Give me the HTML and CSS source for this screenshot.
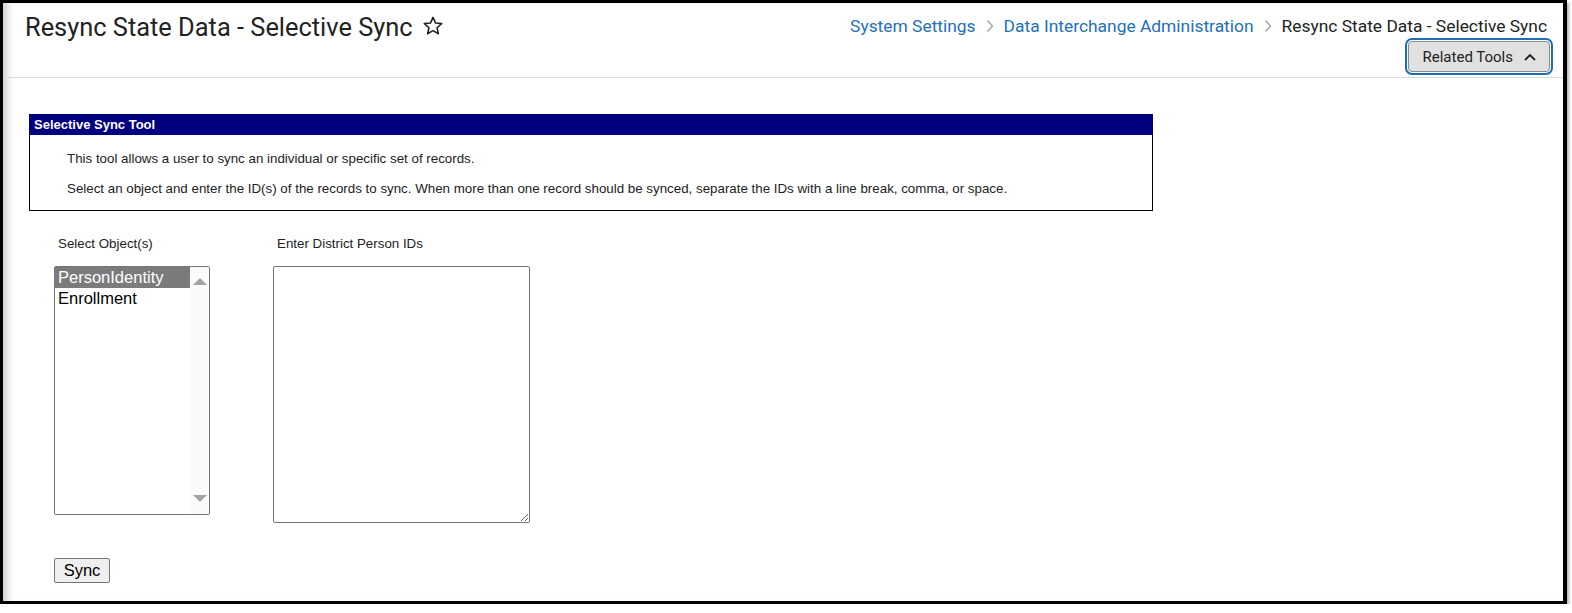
FILE: index.html
```html
<!DOCTYPE html>
<html lang="en">
<head>
    <meta charset="UTF-8">
    <title>Resync State Data - Selective Sync</title>
    <link rel="stylesheet" href="styles.css">
</head>
<body>
    <div class="window">
        <div class="page-header">
            <h1 class="page-title">
                Resync State Data - Selective Sync
                <svg class="star" width="22" height="22" viewBox="0 0 24 24">
                    <path d="M12 2.6l2.8 6.2 6.7.6-5.1 4.5 1.5 6.6L12 17.1l-5.9 3.4 1.5-6.6-5.1-4.5 6.7-.6z" fill="none" stroke="#222" stroke-width="1.7" stroke-linejoin="round"/>
                </svg>
            </h1>
            <div class="header-right">
                <nav class="breadcrumb">
                    <a href="#">System Settings</a>
                    <svg class="sep" width="8" height="14" viewBox="0 0 8 14"><path d="M1.5 1.5l5 5.5-5 5.5" fill="none" stroke="#a0a0a0" stroke-width="1.3"/></svg>
                    <a href="#">Data Interchange Administration</a>
                    <svg class="sep" width="8" height="14" viewBox="0 0 8 14"><path d="M1.5 1.5l5 5.5-5 5.5" fill="none" stroke="#a0a0a0" stroke-width="1.3"/></svg>
                    <span class="current">Resync State Data - Selective Sync</span>
                </nav>
                <button class="related-tools">
                    Related Tools
                    <svg width="14" height="10" viewBox="0 0 14 10">
                        <path d="M2 8l5-5 5 5" fill="none" stroke="#222" stroke-width="1.8"/>
                    </svg>
                </button>
            </div>
        </div>

        <div class="content">
            <div class="tool-box">
                <div class="tool-box-header">Selective Sync Tool</div>
                <div class="tool-box-body">
                    <p>This tool allows a user to sync an individual or specific set of records.</p>
                    <p>Select an object and enter the ID(s) of the records to sync. When more than one record should be synced, separate the IDs with a line break, comma, or space.</p>
                </div>
            </div>

            <div class="form-row">
                <div class="field field-objects">
                    <label>Select Object(s)</label>
                    <div class="listbox">
                        <div class="listbox-options">
                            <div class="option selected">PersonIdentity</div>
                            <div class="option">Enrollment</div>
                        </div>
                        <div class="listbox-scroll">
                            <span class="arrow up"></span>
                            <span class="arrow down"></span>
                        </div>
                    </div>
                </div>
                <div class="field field-ids">
                    <label>Enter District Person IDs</label>
                    <textarea class="ids"></textarea>
                </div>
            </div>

            <button class="sync-btn">Sync</button>
        </div>
    </div>
</body>
</html>
```

FILE: styles.css
```css
body {
    margin: 0;
    padding: 0;
    background: #ffffff;
    font-family: 'Liberation Sans', Arial, sans-serif;
    color: #000000;
}

.window {
    box-sizing: border-box;
    width: 1567px;
    height: 604px;
    border: 3px solid #000000;
    border-right-width: 4px;
    box-shadow: 2px 3px 3px #b0b0b0, inset 10px 0 8px -6px rgba(0, 0, 0, 0.2);
    overflow: hidden;
}

.page-header {
    display: flex;
    justify-content: space-between;
    height: 74px;
    border-bottom: 1px solid #dcdcdc;
    font-family: Roboto, 'Liberation Sans', sans-serif;
}

.page-title {
    margin: 0;
    padding: 9px 0 0 22px;
    font-size: 25.4px;
    font-weight: normal;
    color: #222222;
    display: flex;
    align-items: flex-start;
    gap: 9px;
    line-height: 30px;
    height: 30px;
}

.star {
    margin-top: 3px;
}

.header-right {
    display: flex;
    flex-direction: column;
    align-items: flex-end;
    padding: 12px 16px 0 0;
}

.breadcrumb {
    font-size: 17.4px;
    line-height: 22px;
    color: #222222;
    display: flex;
    align-items: center;
    gap: 10px;
}

.breadcrumb a {
    color: #2370b8;
    text-decoration: none;
}

.related-tools {
    margin-top: 4px;
    margin-right: -3px;
    height: 31px;
    padding: 0 12px 0 14px;
    font-family: Roboto, 'Liberation Sans', sans-serif;
    font-size: 15px;
    color: #222222;
    background: #e1e1e1;
    border: 1px solid #8a8a8a;
    border-radius: 4px;
    outline: 2px solid #1d6fb5;
    outline-offset: 1px;
    display: flex;
    align-items: center;
    gap: 10px;
}

.content {
    padding: 36px 0 0 26px;
}

.tool-box {
    width: 1124px;
    box-sizing: border-box;
    border: 1px solid #000000;
}

.tool-box-header {
    background: #000080;
    color: #ffffff;
    font-size: 13px;
    font-weight: bold;
    height: 21px;
    line-height: 22px;
    padding-left: 5px;
    margin: -1px -1px 0 -1px;
}

.tool-box-body {
    padding: 9px 0 6px 37px;
    font-size: 13.33px;
    color: #222222;
}

.tool-box-body p {
    margin: 0;
    line-height: 30px;
}

.form-row {
    display: flex;
    margin: 25px 0 0 25px;
    gap: 63px;
}

.field label {
    display: block;
    font-size: 13.33px;
    color: #222222;
    padding-left: 4px;
    margin-bottom: 14px;
    line-height: 16px;
}

.listbox {
    width: 156px;
    height: 249px;
    box-sizing: border-box;
    border: 1px solid #767676;
    border-radius: 2px;
    display: flex;
    margin-top: 1px;
}

.listbox-options {
    flex: 1;
}

.option {
    font-size: 16.5px;
    line-height: 21px;
    padding-left: 3px;
    color: #000000;
}

.option.selected {
    background: #7b7b7b;
    color: #ffffff;
}

.listbox-scroll {
    width: 19px;
    background: #fafafa;
    display: flex;
    flex-direction: column;
    justify-content: space-between;
    align-items: center;
    padding: 11px 0 12px;
}

.arrow {
    width: 0;
    height: 0;
    border-left: 7px solid transparent;
    border-right: 7px solid transparent;
}

.arrow.up {
    border-bottom: 7px solid #a3a3a3;
}

.arrow.down {
    border-top: 7px solid #a3a3a3;
}

.ids {
    display: block;
    width: 257px;
    height: 257px;
    box-sizing: border-box;
    border: 1px solid #767676;
    border-radius: 2px;
    margin: 0;
}

.sync-btn {
    margin: 35px 0 0 25px;
    width: 56px;
    height: 25px;
    font-family: 'Liberation Sans', Arial, sans-serif;
    font-size: 16.5px;
    color: #000000;
    background: #efefef;
    border: 1px solid #767676;
    border-radius: 2px;
    padding: 0;
}
```
